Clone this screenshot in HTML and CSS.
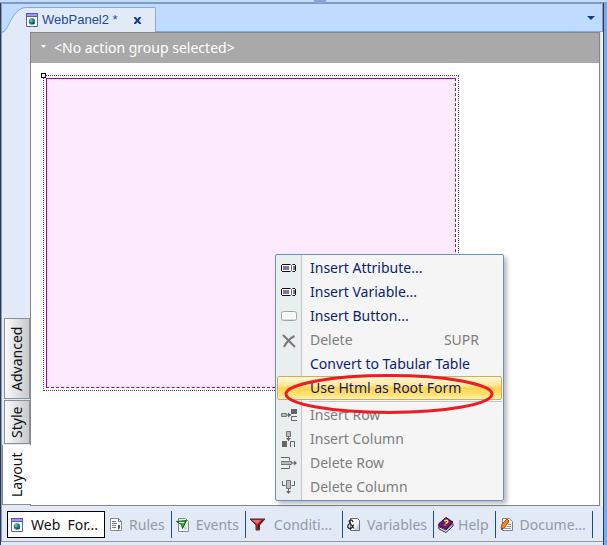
FILE: index.html
```
<!DOCTYPE html>
<html lang="en">
<head>
<meta charset="utf-8">
<title>WebPanel2</title>
<link rel="stylesheet" href="styles.css">
</head>
<body>
<svg class="defs" aria-hidden="true">
  <symbol id="web" viewBox="0 0 12 14">
    <path d="M.5.5h11v13H.5z" fill="#fff" stroke="#5d6b92"/>
    <path d="M0 0h12v4H0z" fill="#5b56c8"/><path d="M1 1h10v2H1z" fill="#9d9bf0"/>
    <circle cx="6" cy="8.500" r="3.200" fill="#1f7f8c"/><circle cx="5" cy="7.500" r="1.400" fill="#5fc0a0"/><path d="M5 11l3.500-2v2z" fill="#143b78"/>
  </symbol>
  <symbol id="attr" viewBox="0 0 16 8">
    <path d="M1 1h13v6H1z" fill="#fff"/>
    <path d="M1 .5h8M12 .5h2M1 7.500h8M12 7.500h2M.5 1v6M14.500 1v6" stroke="#111" fill="none"/>
    <path d="M9 .5h1M11 .5h1M9 7.500h1M11 7.500h1M10.500 1v6" stroke="#777" fill="none"/>
    <path d="M2 2h6v4H2zM12 2h2v4h-2z" fill="#8073a8"/>
  </symbol>
</svg>
<div class="window">
  <div class="splitter"><span class="grip"></span></div>
  <main class="frame">
    <header class="doc-bar">
      <svg class="slope" viewBox="0 0 24 26" aria-hidden="true"><path d="M0 26C5 25 7 15 12 9Q18 .5 24 .5V26z" fill="#e3eaf7"/><path d="M0 25.500C5 24 7 15 12 8Q18 .5 24 .5" fill="none" stroke="#82abe1"/></svg>
      <div class="doc-tab">
        <svg class="doc-icon" aria-hidden="true"><use href="#web"/></svg>
        <span class="doc-name">WebPanel2 *</span>
        <button class="close" aria-label="Close"><svg viewBox="0 0 9 7" aria-hidden="true"><path d="M1.500 0l6 7M7.500 0l-6 7" stroke="#143e8c" stroke-width="2"/></svg></button>
      </div>
      <button class="doc-list" aria-label="Open documents"><svg viewBox="0 0 8 4" aria-hidden="true"><path d="M0 0h8L4 4z" fill="#143e8c"/></svg></button>
    </header>
    <div class="workspace">
      <nav class="side" aria-label="Designer views">
        <button class="side-tab advanced">Advanced</button>
        <button class="side-tab style">Style</button>
        <button class="side-tab layout">Layout</button>
      </nav>
      <section class="designer">
        <button class="action-group"><svg viewBox="0 0 5 3" aria-hidden="true"><path d="M0 0h5L2.500 3z" fill="#fff"/></svg>&lt;No action group selected&gt;</button>
        <div class="canvas">
          <div class="selection"><span class="handle"></span><div class="form"></div></div>
        </div>
      </section>
    </div>
    <nav class="parts" aria-label="Object parts">
      <button class="part active"><svg viewBox="0 0 16 16" aria-hidden="true"><use href="#web" x="0" y="1" width="12" height="14"/></svg>Web&nbsp; For...</button>
      <button class="part rules"><svg viewBox="0 0 16 16" aria-hidden="true"><path d="M1.500 1.500h8l3 3v9h-11z" fill="#fff" stroke="#848c94"/><path d="M9.500 1.500v3h3M3 4.500h4M3 6.500h5M3 8.500h4M3 10.500h4" fill="none" stroke="#727a82"/><path d="M9 8h2v3l-2 2v-2z" fill="#555"/></svg>Rules</button>
      <button class="part"><svg viewBox="0 0 16 16" aria-hidden="true"><path d="M2.500 1.500h7l3 3v10h-10z" fill="#fff" stroke="#848c94"/><path d="M8 10h3M8 12h3" stroke="#aaa"/><path d="M.5 4.500l10-1-4 8-1-4z" fill="#32b832" stroke="#075d17"/><path d="M3 5.500h5" stroke="#c5f3b5"/></svg>Events</button>
      <button class="part conditions"><svg viewBox="0 0 16 16" aria-hidden="true"><path d="M0 2h15L9.500 8v5H6V8z" fill="#c51e2c" stroke="#333"/><path d="M2 3h9L7 7z" fill="#f56d70"/><path d="M13 3L8.500 8v4" stroke="#571018" fill="none"/></svg>Conditi...</button>
      <button class="part"><svg viewBox="0 0 16 16" aria-hidden="true"><path d="M3.500 1.500h7l2 2v10h-9z" fill="#f7f9fb" stroke="#68727c"/><path d="M8 12l4-6v7H7z" fill="#c9d2df"/><path d="M6 5Q5 2.500 3.500 3 1 3.500 3 6l4 5.500M3 6.500Q0 8 1 10.500q2 2 4 0 1-1 1.500-3" fill="none" stroke="#222" stroke-width="1.200"/></svg>Variables</button>
      <button class="part"><svg viewBox="0 0 16 16" aria-hidden="true"><path d="M.5 7l7.500-6.500 7 4.500-7 7-7-3z" fill="#6e1774" stroke="#35083e"/><path d="M.5 9.500L8 13l7-6.500v2.500l-7 6.500-7-3.500z" fill="#ddd" stroke="#46204b"/><path d="M6.500 4.500q1-2 3-1 1 2-2 3M7 7.500v1" fill="none" stroke="#ffe735" stroke-width="1.500"/></svg>Help</button>
      <button class="part"><svg viewBox="0 0 16 16" aria-hidden="true"><path d="M2.500 1.500h7l3 3v9h-10z" fill="#fff" stroke="#7b858f"/><path d="M8 7.500h3M7 9.500h4M4 11.500h7" stroke="#929ba4"/><path d="M7 2l2 2-4 6-3 2-1-1 1-4z" fill="#f28a16" stroke="#c43b16"/><path d="M1 13l2-1-1-1z" fill="#222"/></svg>Docume...</button>
    </nav>
  </main>
</div>

<div class="menu" role="menu">
  <button class="item" role="menuitem"><svg viewBox="0 0 16 16" aria-hidden="true"><use href="#attr" y="4" width="16" height="8"/></svg>Insert Attribute...</button>
  <button class="item" role="menuitem"><svg viewBox="0 0 16 16" aria-hidden="true"><use href="#attr" y="4" width="16" height="8"/></svg>Insert Variable...</button>
  <button class="item" role="menuitem"><svg viewBox="0 0 16 16" aria-hidden="true"><rect x=".5" y="3.500" width="15" height="9" rx="2" fill="#f9f9f9" stroke="#a2a2a2"/><path d="M2 11.500h12" stroke="#ddd"/></svg>Insert Button...</button>
  <button class="item off" role="menuitem" disabled><svg viewBox="0 0 16 16" aria-hidden="true"><path d="M2 3l12 12M13.500 4Q7 7 3 15" fill="none" stroke="#777" stroke-width="2"/></svg>Delete<kbd>SUPR</kbd></button>
  <button class="item" role="menuitem"><span class="blank"></span>Convert to Tabular Table</button>
  <button class="item hot" role="menuitem"><span class="blank"></span>Use Html as Root Form</button>
  <hr>
  <button class="item off" role="menuitem" disabled><svg viewBox="0 0 16 16" aria-hidden="true"><path d="M.5 6.500h5v3h-5z" fill="#bbb" stroke="#777"/><path d="M6 8h4" stroke="#666"/><path d="M7 5.500L10 8l-3 2.500z" fill="#666"/><path d="M10 2h6v5h-6z" fill="#666"/><path d="M16 9.500h-5.500v4H16" fill="none" stroke="#666"/></svg>Insert Row</button>
  <button class="item off" role="menuitem" disabled><svg viewBox="0 0 16 16" aria-hidden="true"><path d="M5.500.5h4v5h-4z" fill="#bbb" stroke="#777"/><path d="M7.500 5v5" stroke="#666"/><path d="M5 7h5l-2.500 3z" fill="#666"/><path d="M1 10h5v6H1z" fill="#666"/><path d="M9.500 16v-5.500h4V16" fill="none" stroke="#666"/></svg>Insert Column</button>
  <button class="item off" role="menuitem" disabled><svg viewBox="0 0 16 16" aria-hidden="true"><path d="M0 2.500h8.500v3M0 13.500h8.500v-3" fill="none" stroke="#666"/><path d="M0 6.500h10.500v3H0z" fill="#bbb" stroke="#777"/><path d="M11 8h4" stroke="#666"/><path d="M13 5.500L16 8l-3 2.500z" fill="#666"/></svg>Delete Row</button>
  <button class="item off" role="menuitem" disabled><svg viewBox="0 0 16 16" aria-hidden="true"><path d="M1.500 2v4.500h3M13.500 2v4.500h-3" fill="none" stroke="#666"/><path d="M5.500 1.500h4v8h-4z" fill="#bbb" stroke="#777"/><path d="M7.500 10v4" stroke="#666"/><path d="M5 12h5l-2.500 3z" fill="#666"/></svg>Delete Column</button>
</div>
<svg class="ring" viewBox="0 0 210 42" aria-hidden="true"><ellipse cx="105" cy="21" rx="103" ry="18.500" fill="none" stroke="#ed1c24" stroke-width="3"/></svg>
</body>
</html>
```
FILE: styles.css
```
* { box-sizing: border-box; }
body {
  margin: 0;
  font: 14px/20px "Noto Sans", "Open Sans", sans-serif;
  background: #7ea8e6;
}
button { font: inherit; color: inherit; margin: 0; padding: 0; border: 0; background: none; text-align: left; white-space: nowrap; }
svg { flex: none; display: block; }
.defs { position: absolute; width: 0; height: 0; }

.window { min-height: 100vh; display: flex; flex-direction: column; }
.splitter { height: 3px; background: #bfdbff; border-bottom: 1px solid #6d9eda; display: flex; justify-content: center; }
.grip { width: 12px; height: 3px; margin-left: 32px; background: #7da8df; }
.frame {
  flex: 1;
  display: flex;
  flex-direction: column;
  margin-right: 3px;
  background: #e3eaf7;
  border: solid #1d3c6b;
  border-width: 0 1px;
}

.doc-bar { height: 29px; padding-top: 3px; display: flex; background: #bfdbff; border: solid #999; border-width: 1px 1px 0 1px; box-shadow: inset 0 -1px #82abe1; }
.slope { width: 24px; height: 26px; }
.doc-tab {
  flex: none;
  display: flex;
  align-items: center;
  width: 130px;
  padding-right: 13px;
  background: #e3eaf7;
  border: solid #82abe1;
  border-width: 1px 1px 0 0;
  border-radius: 0 2px 0 0;
  color: #244b93;
  font: 13px/16px "Liberation Sans", Arial, sans-serif;
}
.doc-icon { width: 12px; height: 14px; }
.doc-name { flex: 1; padding-left: 4px; white-space: pre; }
.close svg { width: 9px; height: 7px; }
.doc-list { margin-left: auto; padding-right: 7px; }
.doc-list svg { width: 8px; height: 4px; margin-bottom: 4px; }

.workspace { flex: 1; display: flex; border-left: 1px solid #999; border-right: 1px solid #fff; }
.side { width: 28px; padding-bottom: 1px; display: flex; flex-direction: column; justify-content: flex-end; align-items: flex-end; gap: 1px; }
.side-tab {
  writing-mode: vertical-rl;
  transform: rotate(180deg);
  text-align: center;
  width: 26px;
  border: 1px solid #8d8f98;
  background: linear-gradient(270deg, #fafafa, #c9c9c9);
  color: #111;
}
.advanced { height: 81px; }
.style { height: 44px; }
.layout { width: 29px; height: 60px; margin-right: -1px; z-index: 1; background: #fff; border-width: 1px 1px 0 0; }
.designer { flex: 1; min-width: 0; margin-right: 2px; background: #fff; border: 1px solid #86878f; display: flex; flex-direction: column; }
.action-group { height: 30px; padding-left: 10px; display: flex; align-items: center; gap: 8px; background: #a9a9a9; color: #fff; }
.action-group svg { width: 5px; height: 3px; margin-bottom: 4px; }
.canvas { flex: 1; padding: 12px; }
.selection { position: relative; max-width: 416px; height: 316px; padding: 2px; border: 1px dotted #444; }
.handle { position: absolute; left: -3px; top: -3px; width: 5px; height: 5px; background: #fff; border: 1px solid #000; }
.form { height: 100%; background: #fdeaff; border: 1px solid #a800a8; border-right-style: dashed; border-bottom-style: dashed; }

.parts { height: 36px; padding: 5px 0 3px 5px; display: flex; border-bottom: 1px solid #999; margin-bottom: 3px; border-left: 1px solid #999; }
.part { flex: none; display: flex; align-items: center; gap: 4px; padding: 0 7px 0 4px; color: #929ba8; box-shadow: inset -1px 0 #244b7d; }
.part svg { width: 16px; height: 16px; }
.active { border: 1px solid #000; background: #fff; color: #111; box-shadow: none; padding: 0 6px 0 3px; }
.conditions { gap: 8px; padding-right: 11px; }

.menu {
  position: absolute;
  left: 275px;
  top: 254px;
  width: 229px;
  padding: 1px;
  border: 1px solid #6593cf;
  border-radius: 2px;
  background: linear-gradient(90deg, #e9eeee 25px, #c5c5c5 25px, #c5c5c5 26px, #f5f5f5 26px);
  box-shadow: 3px 3px 4px #0004;
  color: #0c1f70;
}
.item { width: 100%; height: 24px; display: flex; align-items: center; padding-left: 4px; }
.item svg, .blank { width: 16px; height: 16px; margin-right: 13px; }
.off { color: #7d7d7d; }
.item kbd { font: inherit; margin-left: auto; padding-right: 23px; }
.hot { padding-left: 3px; border: 1px solid #c8ae6a; border-radius: 2px; background: linear-gradient(#fff8d8, #ffe795 40%, #ffd34c 50%, #ffe276 80%, #fff2b0); }
.menu hr { height: 1px; margin: 1px 0 1px 32px; border: 0; background: #c5c5c5; }
.ring { position: absolute; left: 284px; top: 373px; width: 210px; height: 42px; pointer-events: none; }
```
